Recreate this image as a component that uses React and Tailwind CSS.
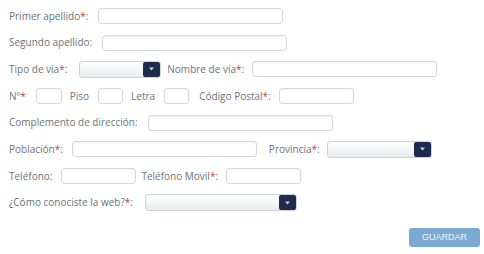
import React from "react";

const Star = () => <span className="text-[#cc3a40]">*</span>;

const Input = ({ w }) => (
  <div
    className={`h-[16px] ${w} rounded-[3px] border border-[#d5d9de] bg-white shadow-[inset_0_1px_2px_rgba(0,0,0,0.06)]`}
  />
);

const Select = ({ w }) => (
  <div
    className={`relative h-[17px] ${w} rounded-[3px] border border-[#cfd3d8] bg-gradient-to-b from-white to-[#e9ebee]`}
  >
    <div className="absolute right-0 top-0 flex h-[15px] w-[17px] items-center justify-center rounded-[2px] bg-[#1f2b4d]">
      <svg width="5" height="4" viewBox="0 0 5 4">
        <path d="M0 0.5 L5 0.5 L2.5 3.5 Z" fill="#c9d2e6" />
      </svg>
    </div>
  </div>
);

export default function App() {
  return (
    <div
      className="relative h-[254px] w-[484px] bg-white text-[10px] text-[#6e7279]"
      style={{ fontFamily: '"Open Sans", "DejaVu Sans", sans-serif' }}
    >
      <div className="flex flex-col gap-[10.7px] pl-[9px] pt-[8px]">
        <div className="flex h-[16px] items-center">
          <span>Primer apellido<Star />:</span>
          <div className="ml-[10px]"><Input w="w-[185px]" /></div>
        </div>
        <div className="flex h-[16px] items-center">
          <span>Segundo apellido:</span>
          <div className="ml-[10px]"><Input w="w-[185px]" /></div>
        </div>
        <div className="flex h-[16px] items-center">
          <span>Tipo de vía<Star />:</span>
          <div className="ml-[12px]"><Select w="w-[82px]" /></div>
          <span className="ml-[6px]">Nombre de vía<Star />:</span>
          <div className="ml-[8px]"><Input w="w-[185px]" /></div>
        </div>
        <div className="flex h-[16px] items-center">
          <span>Nº<Star /></span>
          <div className="ml-[10px]"><Input w="w-[26px]" /></div>
          <span className="ml-[8px]">Piso</span>
          <div className="ml-[9px]"><Input w="w-[25px]" /></div>
          <span className="ml-[8px]">Letra</span>
          <div className="ml-[9px]"><Input w="w-[25px]" /></div>
          <span className="ml-[10px]">Código Postal<Star />:</span>
          <div className="ml-[8px]"><Input w="w-[75px]" /></div>
        </div>
        <div className="flex h-[16px] items-center">
          <span>Complemento de dirección:</span>
          <div className="ml-[10px]"><Input w="w-[185px]" /></div>
        </div>
        <div className="flex h-[16px] items-center">
          <span>Población<Star />:</span>
          <div className="ml-[9px]"><Input w="w-[185px]" /></div>
          <span className="ml-[12px]">Provincia<Star />:</span>
          <div className="ml-[7px]"><Select w="w-[105px]" /></div>
        </div>
        <div className="flex h-[16px] items-center">
          <span>Teléfono:</span>
          <div className="ml-[9px]"><Input w="w-[75px]" /></div>
          <span className="ml-[5px]">Teléfono Movil<Star />:</span>
          <div className="ml-[8px]"><Input w="w-[75px]" /></div>
        </div>
        <div className="flex h-[16px] items-center">
          <span>¿Cómo conociste la web?<Star />:</span>
          <div className="ml-[12px]"><Select w="w-[152px]" /></div>
        </div>
      </div>
      <div className="flex justify-end pr-[4px] pt-[17px]">
        <button
          className="h-[19px] w-[71px] rounded-[3px] bg-[#7ba9d2] text-[9px] text-[#eef4fa]"
          style={{ fontFamily: '"Liberation Sans", Arial, sans-serif' }}
        >
          GUARDAR
        </button>
      </div>
    </div>
  );
}
